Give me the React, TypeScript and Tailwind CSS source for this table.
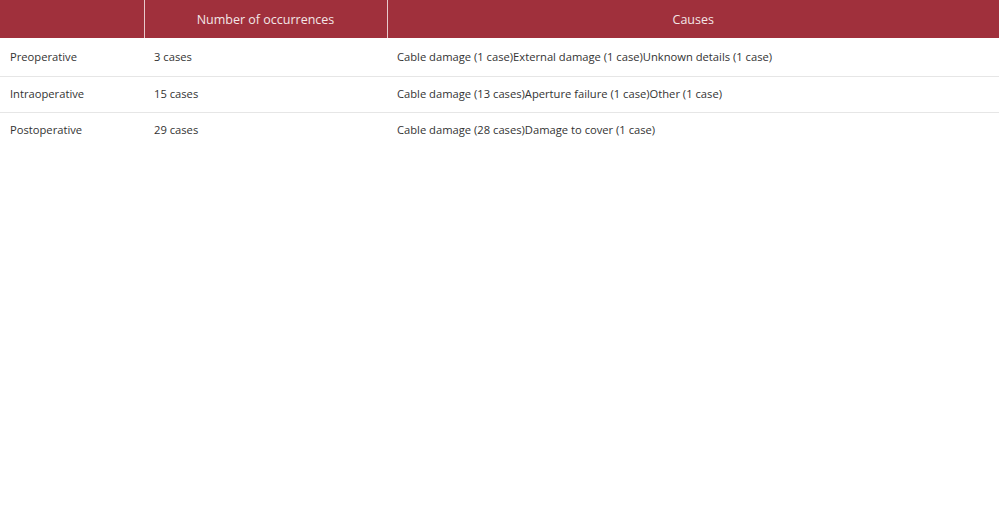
const rows = [
  {
    stage: "Preoperative",
    count: "3 cases",
    causes: "Cable damage (1 case)External damage (1 case)Unknown details (1 case)",
  },
  {
    stage: "Intraoperative",
    count: "15 cases",
    causes: "Cable damage (13 cases)Aperture failure (1 case)Other (1 case)",
  },
  {
    stage: "Postoperative",
    count: "29 cases",
    causes: "Cable damage (28 cases)Damage to cover (1 case)",
  },
];

export default function App() {
  return (
    <div className="w-[1000px] h-[532px] bg-white font-['Open_Sans',sans-serif] text-[#333]">
      <table className="w-[999px] border-collapse table-fixed">
        <colgroup>
          <col className="w-[144px]" />
          <col className="w-[243px]" />
          <col />
        </colgroup>
        <thead>
          <tr className="h-[38px] bg-[#a0303c] text-[12.5px] text-[#f3e6e7]">
            <th className="font-normal pt-[2px] border-r border-[#e8c9cc]"></th>
            <th className="font-normal pt-[2px] border-r border-[#e8c9cc] text-center">Number of occurrences</th>
            <th className="font-normal pt-[2px] text-center">Causes</th>
          </tr>
        </thead>
        <tbody className="text-[11.2px]">
          {rows.map((r, i) => (
            <tr key={r.stage} className={`${i === 0 ? "h-[38px]" : "h-[36px]"} ${i < rows.length - 1 ? "border-b border-[#e6e6e6]" : ""}`}>
              <td className={`pl-[10px] ${i === 0 ? "pt-[2px]" : ""}`}>{r.stage}</td>
              <td className={`pl-[10px] ${i === 0 ? "pt-[2px]" : ""}`}>{r.count}</td>
              <td className={`pl-[10px] ${i === 0 ? "pt-[2px]" : ""}`}>{r.causes}</td>
            </tr>
          ))}
        </tbody>
      </table>
    </div>
  );
}
